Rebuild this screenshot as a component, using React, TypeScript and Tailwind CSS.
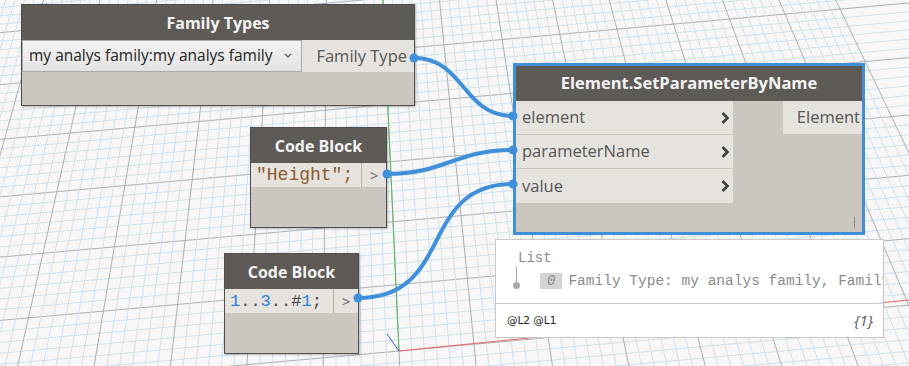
import React from "react";

const VP_X = 335;
const VP_Y = -1045;
const ORIGIN_X = 399;
const ORIGIN_Y = 351;
const SLOPE = -0.09;

// perspective-ish grid of the Dynamo background
const Grid = () => {
  const verticals: React.ReactNode[] = [];
  const minorX = 75.6 / 6;
  for (let i = -40; i <= 48; i++) {
    const xo = ORIGIN_X + i * minorX;
    const xAt = (y: number) => VP_X + ((xo - VP_X) * (y - VP_Y)) / (ORIGIN_Y - VP_Y);
    const major = i % 6 === 0;
    verticals.push(
      <line
        key={"v" + i}
        x1={xAt(0)}
        y1={0}
        x2={xAt(366)}
        y2={366}
        stroke={major ? "#a9afb5" : "#cfe0ec"}
        strokeWidth={1}
      />
    );
  }
  const horizontals: React.ReactNode[] = [];
  const r = Math.pow(1.05, 1 / 6);
  for (let k = -48; k <= 6; k++) {
    const yc = VP_Y + (ORIGIN_Y - VP_Y) * Math.pow(r, k);
    const major = k % 6 === 0;
    horizontals.push(
      <line
        key={"h" + k}
        x1={0}
        y1={yc - SLOPE * ORIGIN_X}
        x2={909}
        y2={yc + SLOPE * (909 - ORIGIN_X)}
        stroke={major ? "#a9afb5" : "#cfe0ec"}
        strokeWidth={1}
      />
    );
  }
  return (
    <svg className="absolute inset-0" width={909} height={366}>
      {horizontals}
      {verticals}
      <line x1={383} y1={0} x2={ORIGIN_X} y2={ORIGIN_Y} stroke="#5cb85c" strokeWidth={1} />
      <line x1={ORIGIN_X} y1={ORIGIN_Y} x2={909} y2={300} stroke="#f06060" strokeWidth={1} />
      <line x1={387} y1={334} x2={ORIGIN_X} y2={ORIGIN_Y} stroke="#4050e0" strokeWidth={1} />
    </svg>
  );
};

const Wires = () => (
  <svg className="absolute inset-0 pointer-events-none" width={909} height={366}>
    <g fill="none" stroke="#3f8fdb" strokeWidth={4} strokeLinecap="round">
      <path d="M414,58 C465,58 462,116 513,116" />
      <path d="M387,174 C445,174 455,150 513,150" />
      <path d="M358,298 C455,298 418,184 513,184" />
    </g>
    <g fill="#3f8fdb">
      <circle cx={414} cy={58} r={4.5} />
      <circle cx={387} cy={174} r={4.5} />
      <circle cx={358} cy={298} r={4.5} />
      <circle cx={513} cy={116} r={4.5} />
      <circle cx={513} cy={150} r={4.5} />
      <circle cx={513} cy={184} r={4.5} />
    </g>
  </svg>
);

const Chevron = () => (
  <svg width={10} height={14} viewBox="0 0 10 14">
    <polyline points="2.5,2 7.5,7 2.5,12" fill="none" stroke="#3e3e3e" strokeWidth={2.6} />
  </svg>
);

const Header = ({ title }: { title: string }) => (
  <div className="flex h-[35px] items-center justify-center bg-[#5e5b57] text-[16px] font-bold text-[#f4f4f4]">
    {title}
  </div>
);

const CodeBlock = ({
  left,
  top,
  width,
  children,
}: {
  left: number;
  top: number;
  width: number;
  children: React.ReactNode;
}) => (
  <div
    className="absolute flex h-[101px] flex-col border border-[#4d4d4d] bg-[#cbc6bf] shadow-[1px_1px_2px_rgba(0,0,0,0.25)]"
    style={{ left, top, width }}
  >
    <Header title="Code Block" />
    <div className="flex h-[24px]">
      <div className="flex flex-1 items-center bg-[#e6e3de] pl-[5px] font-['Liberation_Mono',monospace] text-[18px] leading-none">
        {children}
      </div>
      <div className="flex w-[25px] items-center justify-center border-l border-[#b5b1ab] bg-[#e6e3de] text-[15px] text-[#666]">
        &gt;
      </div>
    </div>
  </div>
);

export default function App() {
  const ports = ["element", "parameterName", "value"];
  return (
    <div className="relative h-[366px] w-[909px] overflow-hidden bg-[#f7f7f7] font-['Open_Sans',sans-serif]">
      <Grid />

      {/* Family Types */}
      <div className="absolute left-[21px] top-[4px] flex h-[102px] w-[394px] flex-col border border-[#4d4d4d] bg-[#cbc6bf] shadow-[1px_1px_2px_rgba(0,0,0,0.25)]">
        <Header title="Family Types" />
        <div className="flex h-[32px]">
          <div className="flex w-[280px] items-center justify-between border border-[#a8a8a8] bg-gradient-to-b from-[#f2f2f2] to-[#e3e3e3] pl-[6px] pr-[9px] text-[15.5px] text-[#222]">
            <span>my analys family:my analys family</span>
            <svg width={8} height={6} viewBox="0 0 8 6">
              <polyline points="1,1 4,4 7,1" fill="none" stroke="#555" strokeWidth={1.2} />
            </svg>
          </div>
          <div className="flex flex-1 items-center justify-end bg-[#e6e3de] pr-[7px] text-[16.5px] text-[#555]">
            Family Type
          </div>
        </div>
      </div>

      {/* Code blocks */}
      <CodeBlock left={250} top={127} width={137}>
        <span className="text-[#8a5a2e]">"Height";</span>
      </CodeBlock>
      <CodeBlock left={224} top={253} width={135}>
        <span className="text-[17px]">
          <span className="text-[#2f80d8]">1</span>
          <span className="text-[#444]">..</span>
          <span className="text-[#2f80d8]">3</span>
          <span className="text-[#444]">..#</span>
          <span className="text-[#2f80d8]">1</span>
          <span className="text-[#444]">;</span>
        </span>
      </CodeBlock>

      {/* Element.SetParameterByName */}
      <div className="absolute left-[513px] top-[63px] flex h-[172px] w-[352px] flex-col border-[3px] border-[#3f8fdb] bg-[#cbc6bf]">
        <div className="flex h-[35px] items-center justify-center bg-[#5e5b57] text-[16.5px] font-bold text-[#f4f4f4]">
          Element.SetParameterByName
        </div>
        <div className="flex flex-1">
          <div className="flex w-[217px] flex-col">
            {ports.map((p, i) => (
              <div
                key={p}
                className={`flex h-[34px] items-center justify-between bg-[#e6e3de] pl-[6px] pr-[3px] text-[16.5px] text-[#555] ${
                  i < ports.length - 1 ? "border-b border-[#cbc6bf]" : ""
                }`}
              >
                <span>{p}</span>
                <Chevron />
              </div>
            ))}
          </div>
          <div className="flex flex-1 flex-col items-end justify-between">
            <div className="flex h-[33px] w-[79px] items-center justify-end bg-[#e6e3de] pr-[2px] text-[16.5px] text-[#555]">
              Element
            </div>
            <div className="mb-[4px] mr-[7px] h-[11px] w-[1px] bg-[#888]" />
          </div>
        </div>
      </div>

      {/* Preview bubble */}
      <div className="absolute left-[495px] top-[239px] flex h-[99px] w-[389px] flex-col border border-[#c9c9c9] bg-white">
        <div className="relative h-[64px] overflow-hidden border-b border-[#c9c9c9] font-['Liberation_Mono',monospace] text-[14px] text-[#888]">
          <div className="absolute left-[22px] top-[11px] leading-none">List</div>
          <div className="absolute left-[20px] top-[27px] h-[18px] w-[1px] bg-[#aaa]" />
          <div className="absolute left-[17px] top-[42px] h-[7px] w-[7px] rounded-full bg-[#aaa]" />
          <div className="absolute left-[44px] top-[33px] flex items-center whitespace-nowrap leading-none">
            <span className="mr-[6px] bg-[#d4d4d4] px-[7px] py-[1px] italic text-[#888]">0</span>
            <span className="text-[14.5px] text-[#8a8a8a]">Family Type: my analys family, Family</span>
          </div>
        </div>
        <div className="flex flex-1 items-center justify-between pl-[11px] pr-[10px]">
          <span className="font-['DejaVu_Sans',sans-serif] text-[10.5px] text-[#222]">@L2 @L1</span>
          <span className="text-[15px] italic text-[#555]">{"{1}"}</span>
        </div>
      </div>

      <Wires />
    </div>
  );
}
